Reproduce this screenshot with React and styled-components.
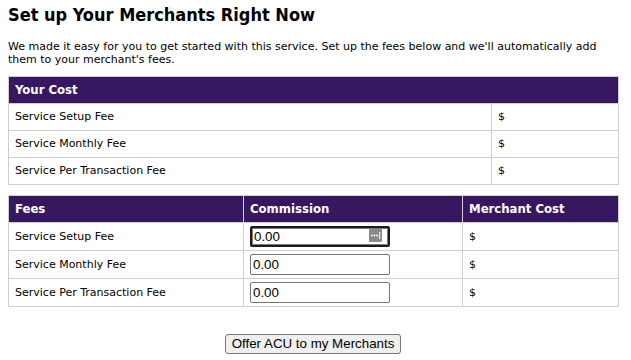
import React from "react";
import styled, { createGlobalStyle } from "styled-components";

const Global = createGlobalStyle`
  html, body { margin: 0; padding: 0; background: #fff; }
  body { font-family: "DejaVu Sans", sans-serif; color: #000; }
`;

const Page = styled.div`
  padding: 4px 6px 8px 8px;
`;

const Title = styled.h1`
  margin: 0;
  font-family: "DejaVu Sans Condensed", "DejaVu Sans", sans-serif;
  font-size: 18px;
  line-height: 22px;
  font-weight: bold;
`;

const Intro = styled.p`
  margin: 14px 0 10px;
  font-size: 11px;
  line-height: 13px;
`;

const Table = styled.table`
  width: 610px;
  border-collapse: collapse;
  table-layout: fixed;
  margin-bottom: 10px;
  font-size: 11px;
`;

const Col = styled.col`
  width: ${(p) => p.$w}px;
`;

const Th = styled.th`
  background: #371760;
  color: #fff;
  font-family: "DejaVu Sans Condensed", "DejaVu Sans", sans-serif;
  font-size: 13px;
  font-weight: bold;
  text-align: left;
  border: 1px solid #cfcfcf;
  padding: 0 6px;
  height: 27px;
  line-height: 16px;
  box-sizing: border-box;
`;

const Td = styled.td`
  border: 1px solid #cfcfcf;
  padding: 0 6px;
  height: ${(p) => (p.$tall ? 28 : 27)}px;
  line-height: 14px;
  vertical-align: middle;
  box-sizing: border-box;
`;

const InputWrap = styled.div`
  position: relative;
  width: 140px;
  height: 21px;
`;

const Input = styled.input`
  box-sizing: border-box;
  display: block;
  width: 140px;
  height: 21px;
  margin: 0;
  padding: 1px 2px;
  font-family: "Liberation Sans", Arial, sans-serif;
  font-size: 13.33px;
  color: #000;
  background: #fff;
  border: ${(p) => (p.$focused ? "2px solid #1c1c1c" : "1px solid #767676")};
  box-shadow: ${(p) => (p.$focused ? "inset 0 0 0 1px #7a7a7a" : "none")};
  border-radius: 2px;
  outline: none;
`;

const FillIcon = styled.span`
  position: absolute;
  right: 8px;
  top: 3px;
  width: 13px;
  height: 13px;
  display: block;
`;

const Actions = styled.div`
  width: 610px;
  text-align: center;
  padding-top: 16px;
`;

const Button = styled.button`
  font-family: "Liberation Sans", Arial, sans-serif;
  font-size: 13.33px;
  color: #000;
  background: #efefef;
  border: 1px solid #767676;
  border-radius: 3px;
  padding: 1px 6px;
  height: 20px;
  line-height: 16px;
`;

const costRows = ["Service Setup Fee", "Service Monthly Fee", "Service Per Transaction Fee"];

export default function App() {
  return (
    <Page>
      <Global />
      <Title>Set up Your Merchants Right Now</Title>
      <Intro>
        We made it easy for you to get started with this service. Set up the fees below and we'll automatically add
        <br />
        them to your merchant's fees.
      </Intro>
      <Table>
        <colgroup>
          <Col $w={483} />
          <Col $w={127} />
        </colgroup>
        <thead>
          <tr>
            <Th colSpan={2}>Your Cost</Th>
          </tr>
        </thead>
        <tbody>
          {costRows.map((r) => (
            <tr key={r}>
              <Td>{r}</Td>
              <Td>$</Td>
            </tr>
          ))}
        </tbody>
      </Table>
      <Table>
        <colgroup>
          <Col $w={235} />
          <Col $w={219} />
          <Col $w={156} />
        </colgroup>
        <thead>
          <tr>
            <Th>Fees</Th>
            <Th>Commission</Th>
            <Th>Merchant Cost</Th>
          </tr>
        </thead>
        <tbody>
          {costRows.map((r, i) => (
            <tr key={r}>
              <Td $tall>{r}</Td>
              <Td $tall>
                <InputWrap>
                  <Input $focused={i === 0} defaultValue="0.00" readOnly />
                  {i === 0 && (
                    <FillIcon>
                      <svg width="13" height="13" viewBox="0 0 13 13">
                        <rect x="0" y="0" width="13" height="13" rx="1" fill="#8a8a8a" />
                        <circle cx="3" cy="6.5" r="0.9" fill="#fff" />
                        <circle cx="5.5" cy="6.5" r="0.9" fill="#fff" />
                        <circle cx="8" cy="6.5" r="0.9" fill="#fff" />
                        <rect x="10.2" y="3" width="1" height="7" fill="#fff" />
                      </svg>
                    </FillIcon>
                  )}
                </InputWrap>
              </Td>
              <Td $tall>$</Td>
            </tr>
          ))}
        </tbody>
      </Table>
      <Actions>
        <Button>Offer ACU to my Merchants</Button>
      </Actions>
    </Page>
  );
}
